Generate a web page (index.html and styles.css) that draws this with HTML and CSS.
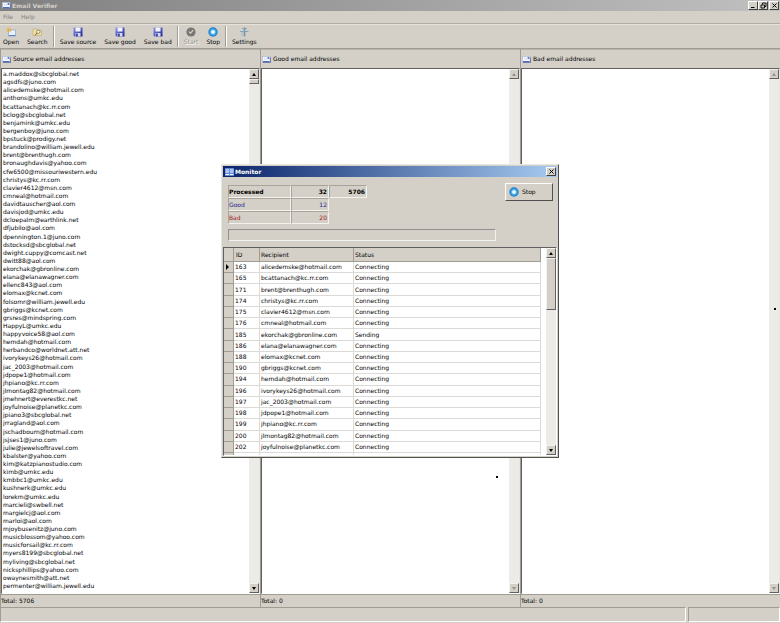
FILE: index.html
```
<!DOCTYPE html>
<html lang="en">
<head>
  <meta charset="UTF-8">
  <meta name="viewport" content="width=device-width, initial-scale=1.0">
  <title>Email Verifier</title>
  <link rel="stylesheet" href="styles.css">
</head>
<body>
  <svg class="defs" aria-hidden="true">
    <defs>
      <linearGradient id="blueShade" x1="0" y1="0" x2="1" y2="1">
        <stop offset="0" stop-color="#8c9bea"/>
        <stop offset="1" stop-color="#1c1f8c"/>
      </linearGradient>
      <radialGradient id="stopShade">
        <stop offset="0" stop-color="#ffffff"/>
        <stop offset="0.3" stop-color="#e4f6ff"/>
        <stop offset="0.5" stop-color="#48b4ec"/>
        <stop offset="1" stop-color="#1976c4"/>
      </radialGradient>
    </defs>
    <symbol id="mail" viewBox="0 0 9 7">
      <path d="M1 6.5H8.5V1.5" fill="none" stroke="#5b6690"/>
      <rect x="0.5" y="0.5" width="7.5" height="5.5" fill="#f4f7ff" stroke="#a9b6d8" stroke-width="0.6"/>
      <path d="M1 5.5H7.5" stroke="#4a6cc0"/>
      <rect x="5.6" y="1.2" width="1.7" height="1.6" fill="#3d5cb8"/>
      <path d="M2 3H5" stroke="#b8c4e0" stroke-width="0.6"/>
    </symbol>
    <symbol id="disk" viewBox="0 0 10 10">
      <path d="M0.5 0.5H9.5V9.5H1.5L0.5 8.5Z" fill="url(#blueShade)"/>
      <rect x="2.5" y="0.5" width="5" height="4" fill="#f2f3ff"/>
      <rect x="2.5" y="6" width="5" height="3.5" fill="#d4d8f4"/>
      <rect x="3.2" y="6.6" width="1.5" height="2.9" fill="#20248c"/>
    </symbol>
    <symbol id="stop" viewBox="0 0 10 10">
      <circle cx="5" cy="5" r="4.7" fill="url(#stopShade)"/>
    </symbol>
  </svg>

  <header class="titlebar">
    <svg class="mail-icon"><use href="#mail"/></svg>
    <h1>Email Verifier</h1>
    <div class="window-buttons">
      <button type="button" aria-label="Minimize"><svg viewBox="0 0 7 7"><path d="M1 5.5H4.5" stroke="#000"/></svg></button>
      <button type="button" aria-label="Restore"><svg viewBox="0 0 7 7"><path d="M2.5 2.5V1H6V4.5H5M1 3H4.5V6H1Z" fill="none" stroke="#000" stroke-width="0.9"/></svg></button>
      <button type="button" class="close" aria-label="Close"><svg viewBox="0 0 7 7"><path d="M1.5 1.5L5.5 5.5M5.5 1.5L1.5 5.5" stroke="#000"/></svg></button>
    </div>
  </header>

  <nav class="menu">
    <button type="button">File</button>
    <button type="button">Help</button>
  </nav>

  <div class="toolbar">
    <button type="button">
      <svg viewBox="0 0 10 10"><rect x="2.5" y="3" width="7" height="6" fill="#e9f1ff" stroke="#8fa5cc" stroke-width="0.7"/><path d="M3 8.5H9.5" stroke="#5d82c0"/><path d="M3 0.5V5.5M0.5 3H5.5M1.2 1.2L4.8 4.8M4.8 1.2L1.2 4.8" stroke="#e6b13c" stroke-width="0.9"/></svg>
      Open
    </button>
    <button type="button">
      <svg viewBox="0 0 10 10"><path d="M1 2H4L5 3H9.5V8.5H1Z" fill="#f0dfa0" stroke="#bda867" stroke-width="0.6"/><circle cx="6.3" cy="4.8" r="1.7" fill="#f9f6e4" stroke="#6e6a50" stroke-width="0.7"/><path d="M5 6L3 8.5" stroke="#8a5c2c"/></svg>
      Search
    </button>
    <span class="separator"></span>
    <button type="button"><svg><use href="#disk"/></svg>Save source</button>
    <button type="button"><svg><use href="#disk"/></svg>Save good</button>
    <button type="button"><svg><use href="#disk"/></svg>Save bad</button>
    <span class="separator"></span>
    <button type="button" disabled>
      <svg viewBox="0 0 10 10"><circle cx="5" cy="5" r="4.6" fill="#777"/><path d="M3 4.6L4.5 6.2L7.2 3.2" fill="none" stroke="#d8d4cc" stroke-width="1.2"/></svg>
      Start
    </button>
    <button type="button"><svg><use href="#stop"/></svg>Stop</button>
    <span class="separator"></span>
    <button type="button">
      <svg viewBox="0 0 10 10"><path d="M5.5 0.5V9.5" stroke="#6f94b0" stroke-width="1.6"/><path d="M3 1.5H8M1 4.5H9.5" stroke="#7fa5bf" stroke-width="1.2"/><path d="M3 4.5V9.5" stroke="#9fb6c4"/></svg>
      Settings
    </button>
  </div>

  <main class="panes">
    <section class="pane">
      <h2><svg class="mail-icon"><use href="#mail"/></svg>Source email addresses</h2>
      <div class="list-box">
        <ul id="sourceList"></ul>
        <div class="scrollbar">
          <button type="button" class="up" aria-label="Scroll up"></button>
          <span class="thumb"></span>
          <button type="button" class="down" aria-label="Scroll down"></button>
        </div>
      </div>
      <p class="total">Total: 5706</p>
    </section>
    <section class="pane">
      <h2><svg class="mail-icon"><use href="#mail"/></svg>Good email addresses</h2>
      <div class="list-box">
        <ul></ul>
        <div class="scrollbar">
          <button type="button" class="up" aria-label="Scroll up" disabled></button>
          <button type="button" class="down" aria-label="Scroll down" disabled></button>
        </div>
      </div>
      <p class="total">Total: 0</p>
    </section>
    <section class="pane">
      <h2><svg class="mail-icon"><use href="#mail"/></svg>Bad email addresses</h2>
      <div class="list-box">
        <ul></ul>
        <div class="scrollbar">
          <button type="button" class="up" aria-label="Scroll up" disabled></button>
          <button type="button" class="down" aria-label="Scroll down" disabled></button>
        </div>
      </div>
      <p class="total">Total: 0</p>
    </section>
  </main>

  <footer class="statusbar">
    <span class="status-main"></span>
    <span class="status-side"></span>
  </footer>

  <span class="speck speck-middle"></span>
  <span class="speck speck-right"></span>

  <div class="dialog" role="dialog" aria-labelledby="monitorTitle">
    <div class="titlebar active">
      <svg class="form-icon" viewBox="0 0 9 8"><rect width="9" height="8" fill="#5f86d8"/><path d="M0.5 2H4M5 2H8.5M0.5 4H4M5 4H8.5M0.5 6.5H4M5 6.5H8.5" stroke="#fff" stroke-width="1.2"/></svg>
      <h2 id="monitorTitle">Monitor</h2>
      <div class="window-buttons">
        <button type="button" aria-label="Close"><svg viewBox="0 0 7 7"><path d="M1.5 1.5L5.5 5.5M5.5 1.5L1.5 5.5" stroke="#000"/></svg></button>
      </div>
    </div>
    <div class="summary">
      <table class="counts">
        <tr class="processed"><th scope="row">Processed</th><td>32</td><td>5706</td></tr>
        <tr class="good"><th scope="row">Good</th><td>12</td></tr>
        <tr class="bad"><th scope="row">Bad</th><td>20</td></tr>
      </table>
      <button type="button" class="stop-button"><svg><use href="#stop"/></svg>Stop</button>
    </div>
    <div class="progress" role="progressbar" aria-label="Progress"></div>
    <div class="grid-box">
      <table class="grid">
        <thead>
          <tr><th class="mark"></th><th class="id">ID</th><th class="recipient">Recipient</th><th>Status</th></tr>
        </thead>
        <tbody id="monitorRows"></tbody>
        <tfoot>
          <tr><td class="mark"></td><td></td><td></td><td></td></tr>
        </tfoot>
      </table>
      <div class="scrollbar">
        <button type="button" class="up" aria-label="Scroll up"></button>
        <span class="thumb"></span>
        <button type="button" class="down" aria-label="Scroll down"></button>
      </div>
    </div>
  </div>

  <script>
    const addresses = [
      'a.maddox@sbcglobal.net', 'agsdfs@juno.com', 'alicedemske@hotmail.com', 'anthons@umkc.edu',
      'bcattanach@kc.rr.com', 'bclog@sbcglobal.net', 'benjamink@umkc.edu', 'bergenboy@juno.com',
      'bpstuck@prodigy.net', 'brandolino@william.jewell.edu', 'brent@brenthugh.com', 'bronaughdavis@yahoo.com',
      'cfw6500@missouriwestern.edu', 'christys@kc.rr.com', 'clavier4612@msn.com', 'cmneal@hotmail.com',
      'davidtauscher@aol.com', 'davisjod@umkc.edu', 'dcloepalm@earthlink.net', 'dfjubilo@aol.com',
      'dpennington.1@juno.com', 'dstocksd@sbcglobal.net', 'dwight.cuppy@comcast.net', 'dwitt88@aol.com',
      'ekorchak@gbronline.com', 'elana@elanawagner.com', 'ellenc843@aol.com', 'elomax@kcnet.com',
      'folsomr@william.jewell.edu', 'gbriggs@kcnet.com', 'grsres@mindspring.com', 'HappyL@umkc.edu',
      'happyvoice58@aol.com', 'hemdah@hotmail.com', 'herbandco@worldnet.att.net', 'ivorykeys26@hotmail.com',
      'jac_2003@hotmail.com', 'jdpope1@hotmail.com', 'jhpiano@kc.rr.com', 'jlmontag82@hotmail.com',
      'jmehnert@everestkc.net', 'joyfulnoise@planetkc.com', 'jpiano3@sbcglobal.net', 'jrragland@aol.com',
      'jschadbourn@hotmail.com', 'jsjses1@juno.com', 'julie@jewelsoftravel.com', 'kbalster@yahoo.com',
      'kim@katzpianostudio.com', 'kimb@umkc.edu', 'kmbbc1@umkc.edu', 'kushnerk@umkc.edu',
      'lorekm@umkc.edu', 'marcieli@swbell.net', 'margielcj@aol.com', 'marloi@aol.com',
      'mjoybusenitz@juno.com', 'musicblossom@yahoo.com', 'musicforsail@kc.rr.com', 'myers8199@sbcglobal.net',
      'myliving@sbcglobal.net', 'nicksphillips@yahoo.com', 'owaynesmith@att.net', 'permenter@william.jewell.edu'
    ];

    const recipients = [
      [163, 'alicedemske@hotmail.com', 'Connecting'],
      [165, 'bcattanach@kc.rr.com', 'Connecting'],
      [171, 'brent@brenthugh.com', 'Connecting'],
      [174, 'christys@kc.rr.com', 'Connecting'],
      [175, 'clavier4612@msn.com', 'Connecting'],
      [176, 'cmneal@hotmail.com', 'Connecting'],
      [185, 'ekorchak@gbronline.com', 'Sending'],
      [186, 'elana@elanawagner.com', 'Connecting'],
      [188, 'elomax@kcnet.com', 'Connecting'],
      [190, 'gbriggs@kcnet.com', 'Connecting'],
      [194, 'hemdah@hotmail.com', 'Connecting'],
      [196, 'ivorykeys26@hotmail.com', 'Connecting'],
      [197, 'jac_2003@hotmail.com', 'Connecting'],
      [198, 'jdpope1@hotmail.com', 'Connecting'],
      [199, 'jhpiano@kc.rr.com', 'Connecting'],
      [200, 'jlmontag82@hotmail.com', 'Connecting'],
      [202, 'joyfulnoise@planetkc.com', 'Connecting']
    ];

    const sourceList = document.getElementById('sourceList');
    addresses.forEach(address => {
      const item = document.createElement('li');
      item.textContent = address;
      sourceList.appendChild(item);
    });

    const monitorRows = document.getElementById('monitorRows');
    recipients.forEach((recipient, index) => {
      const row = monitorRows.insertRow();
      const mark = row.insertCell();
      mark.className = index === 0 ? 'mark current' : 'mark';
      recipient.forEach(value => {
        row.insertCell().textContent = value;
      });
    });
  </script>
</body>
</html>
```
FILE: styles.css
```
* {
  box-sizing: border-box;
}

body {
  display: flex;
  flex-direction: column;
  height: 100vh;
  margin: 0;
  overflow: hidden;
  font-family: "DejaVu Sans", sans-serif;
  font-size: 6px;
  line-height: 8px;
  color: #000;
  background-color: #d4d0c8;
}

h1, h2, p, ul {
  margin: 0;
  padding: 0;
  font-size: 6px;
}

ul {
  list-style-type: none;
}

button {
  margin: 0;
  padding: 0;
  border: none;
  font: inherit;
  color: inherit;
  background-color: #d4d0c8;
}

.defs {
  position: absolute;
  width: 0;
  height: 0;
}

.mail-icon {
  flex: none;
  width: 9px;
  height: 7px;
}

/* Title bars */
.titlebar {
  display: flex;
  align-items: center;
  gap: 1px;
  flex: none;
  height: 11px;
  padding: 0 1px 0 2px;
  color: #d4d0c8;
  background: linear-gradient(to right, #808080, #c0c0c0);
}

.titlebar.active {
  color: #fff;
  background: linear-gradient(to right, #0a246a, #a6caf0);
}

.form-icon {
  width: 9px;
  height: 8px;
}

.window-buttons {
  display: flex;
  margin-left: auto;
}

.window-buttons button {
  display: flex;
  align-items: center;
  justify-content: center;
  width: 10px;
  height: 9px;
  border: 1px solid;
  border-color: #fff #404040 #404040 #fff;
}

.window-buttons svg {
  width: 7px;
  height: 7px;
}

.window-buttons .close {
  margin-left: 1px;
}

/* Menu and toolbar */
.menu {
  display: flex;
  gap: 8px;
  flex: none;
  height: 13px;
  padding: 0 3px;
  color: #808080;
  border-bottom: 1px solid #b0aca4;
}

.toolbar {
  display: flex;
  align-items: center;
  gap: 8px;
  flex: none;
  height: 25px;
  padding: 0 3px;
  border-top: 1px solid #e6e3dd;
  border-bottom: 1px solid #a09c94;
}

.toolbar button {
  display: flex;
  flex-direction: column;
  align-items: center;
  gap: 1px;
}

.toolbar button:disabled {
  color: #9a968e;
  text-shadow: 1px 1px #fff;
}

.toolbar svg {
  width: 10px;
  height: 10px;
}

.separator {
  width: 2px;
  height: 21px;
  margin: 0 -3px;
  border-left: 1px solid #a09c94;
  border-right: 1px solid #fff;
}

/* Address lists */
.panes {
  display: grid;
  grid-template-columns: repeat(3, 1fr);
  flex: 1;
  min-height: 0;
}

.pane {
  display: flex;
  flex-direction: column;
  min-height: 0;
  border-left: 1px solid #a09c94;
}

.pane h2 {
  display: flex;
  align-items: center;
  gap: 2px;
  height: 19px;
  padding: 0 1px;
  font-weight: normal;
  border-top: 1px solid #b8b4ac;
}

.list-box {
  display: flex;
  flex: 1;
  min-height: 0;
  border: 1px solid;
  border-color: #606060 #e8e6e2 #fff #606060;
  background-color: #fff;
}

.list-box ul {
  display: flex;
  flex-direction: column;
  justify-content: space-between;
  flex: 1;
  padding: 1px 1px 3px;
}

.total {
  height: 13px;
  padding: 2px 0 0;
  border-top: 1px solid #a09c94;
}

.scrollbar {
  display: flex;
  flex-direction: column;
  flex: none;
  width: 10px;
  background-color: #ecebe7;
}

.scrollbar button {
  display: flex;
  align-items: center;
  justify-content: center;
  flex: none;
  height: 10px;
}

.scrollbar button, .thumb {
  border: 1px solid;
  border-color: #f4f2ee #606060 #606060 #f4f2ee;
}

.scrollbar button::before {
  content: "";
  border: 2px solid transparent;
}

.scrollbar .up::before {
  border-top: none;
  border-bottom: 3px solid #000;
}

.scrollbar .down::before {
  border-bottom: none;
  border-top: 3px solid #000;
}

.scrollbar .up:disabled::before {
  border-bottom-color: #909090;
}

.scrollbar .down:disabled::before {
  border-top-color: #909090;
}

.scrollbar .down {
  margin-top: auto;
}

.thumb {
  height: 5px;
  background-color: #d4d0c8;
}

/* Status bar */
.statusbar {
  display: flex;
  gap: 2px;
  flex: none;
  height: 16px;
  padding-bottom: 1px;
}

.statusbar span {
  border: 1px solid;
  border-color: #a09c94 #fff #fff #a09c94;
}

.status-main {
  flex: 1;
}

.status-side {
  width: 92px;
}

.speck {
  position: absolute;
  width: 2px;
  height: 2px;
  background-color: #000;
}

.speck-middle {
  left: 496px;
  top: 476px;
}

.speck-right {
  left: 774px;
  top: 308px;
}

/* Monitor window */
.dialog {
  position: absolute;
  left: 221px;
  top: 164px;
  width: 338px;
  padding: 1px;
  border: 1px solid;
  border-color: #e8e6e2 #505050 #505050 #e8e6e2;
  background-color: #d4d0c8;
}

.summary {
  display: flex;
  justify-content: space-between;
  align-items: flex-start;
  padding: 6px 4px 0 5px;
}

.counts {
  margin-top: 2px;
  border-spacing: 0;
}

.counts th, .counts td {
  height: 13px;
  padding: 0 1px 0 0;
  border: 1px solid;
  border-color: #a8a49c #f4f2ee #f4f2ee #a8a49c;
  font-weight: normal;
}

.counts th {
  width: 63px;
  text-align: left;
}

.counts td {
  width: 38px;
  text-align: right;
}

.counts .processed th, .counts .processed td {
  font-weight: bold;
}

.good {
  color: #1c1c90;
}

.bad {
  color: #a01818;
}

.stop-button {
  display: flex;
  align-items: center;
  gap: 3px;
  width: 48px;
  height: 18px;
  padding: 0 3px;
  border: 1px solid;
  border-color: #fff #505050 #505050 #fff;
}

.stop-button svg {
  width: 10px;
  height: 10px;
}

.progress {
  width: 268px;
  height: 12px;
  margin: 5px 5px 6px;
  border: 1px solid;
  border-color: #909090 #f4f2ee #f4f2ee #909090;
}

.grid-box {
  display: flex;
  height: 209px;
  border: 1px solid;
  border-color: #606060 #fff #fff #606060;
  background-color: #fff;
}

.grid {
  flex: 1;
  height: 207px;
  margin-right: 5px;
  border-spacing: 0;
  table-layout: fixed;
}

.grid th, .grid td {
  padding: 0 1px;
  text-align: left;
  font-weight: normal;
  border-right: 1px solid #dcdad6;
  border-bottom: 1px solid #dcdad6;
}

.grid th {
  height: 14px;
  background-color: #d4d0c8;
  border-color: #a09c94;
}

.grid tfoot td {
  height: 2px;
  border-bottom: none;
}

.grid .mark {
  width: 10px;
  background-color: #d4d0c8;
  border-color: #a09c94;
}

.grid .id {
  width: 26px;
  padding-left: 2px;
}

.grid .recipient {
  width: 94px;
}

.grid .current::before {
  content: "";
  display: block;
  width: 3px;
  margin: 0 auto;
  border: 3px solid transparent;
  border-left-color: #000;
  border-right: none;
}

.grid-box .thumb {
  height: 52px;
}
```
